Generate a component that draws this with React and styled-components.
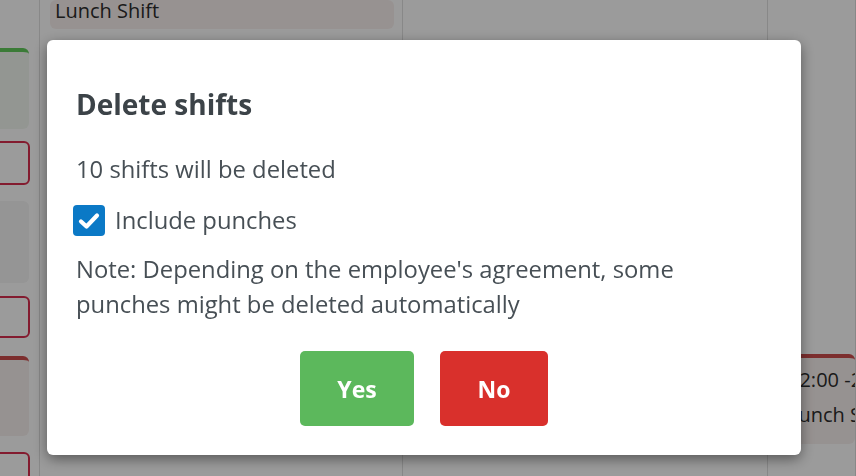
import styled, { createGlobalStyle } from 'styled-components';

const GlobalStyle = createGlobalStyle`
  html, body {
    margin: 0;
    padding: 0;
    width: 856px;
    height: 476px;
    overflow: hidden;
    font-family: 'Open Sans', 'Lato', sans-serif;
  }
`;

const Board = styled.div`
  display: grid;
  grid-template-columns: 40px 363px 365px 1fr;
  height: 476px;
  background: #fbfbfb;
`;

const Column = styled.div`
  display: flex;
  flex-direction: column;
  border-right: 1px solid #dcdcdc;
  padding: ${(p) => p.$pad || '0'};
  overflow: hidden;
`;

const ShiftCard = styled.div`
  flex: none;
  height: ${(p) => p.$h}px;
  margin-top: ${(p) => p.$mt || 0}px;
  margin-left: ${(p) => p.$ml || 0}px;
  margin-right: ${(p) => p.$mr || 0}px;
  border-radius: 6px;
  background: ${(p) => (p.$outline ? '#fafafa' : p.$bg || '#f0f0f0')};
  border: ${(p) => (p.$outline ? '2px solid #d42d4d' : 'none')};
  border-top: ${(p) => (p.$top ? `4px solid ${p.$top}` : p.$outline ? '2px solid #d42d4d' : 'none')};
  box-sizing: border-box;
  padding: ${(p) => p.$p || '6px 8px'};
  color: #2c2c2c;
  font-size: 20px;
  line-height: ${(p) => p.$lh || '34px'};
  white-space: nowrap;
  overflow: hidden;
`;

const Overlay = styled.div`
  position: fixed;
  inset: 0;
  background: rgba(0, 0, 0, 0.38);
`;

const Modal = styled.div`
  position: fixed;
  left: 47px;
  top: 40px;
  width: 754px;
  height: 415px;
  box-sizing: border-box;
  background: #fff;
  border-radius: 6px;
  box-shadow: 0 4px 14px rgba(0, 0, 0, 0.45);
  padding: 44px 29px 0;
  color: #474f55;
`;

const Title = styled.h2`
  margin: 0 0 28px;
  font-size: 28px;
  line-height: 40px;
  font-weight: 700;
  color: #3c4348;
`;

const Text = styled.p`
  margin: 0 0 ${(p) => p.$mb || 16}px;
  font-size: 23.8px;
  line-height: 35px;
`;

const CheckRow = styled.label`
  display: flex;
  align-items: center;
  gap: 10px;
  font-size: 23.8px;
  line-height: 35px;
  margin-bottom: 14px;
`;

const Box = styled.span`
  width: 32px;
  height: 31px;
  margin-left: -3px;
  border-radius: 4px;
  background: #0b79c6;
  display: flex;
  align-items: center;
  justify-content: center;
`;

const Actions = styled.div`
  display: flex;
  justify-content: center;
  gap: 26px;
  margin-top: 29px;
`;

const Button = styled.button`
  width: ${(p) => p.$w}px;
  height: 75px;
  border: none;
  border-radius: 5px;
  background: ${(p) => p.$bg};
  color: #fff;
  font-family: inherit;
  font-size: 23px;
  font-weight: 700;
`;

export default function App() {
  return (
    <>
      <GlobalStyle />
      <Board>
        <Column>
          <ShiftCard $h={81} $mt={48} $ml={-10} $mr={10} $top="#5fc75a" $bg="#eef3ec" />
          <ShiftCard $h={44} $mt={12} $ml={-10} $mr={9} $outline />
          <ShiftCard $h={82} $mt={16} $ml={-10} $mr={10} />
          <ShiftCard $h={42} $mt={13} $ml={-10} $mr={9} $outline />
          <ShiftCard $h={80} $mt={18} $ml={-10} $mr={10} $top="#c94b4b" $bg="#f3ecea" />
          <ShiftCard $h={60} $mt={16} $ml={-10} $mr={9} $outline />
        </Column>
        <Column $pad="0 8px 0 10px">
          <ShiftCard $h={29} $p="0 5px" $lh="22px" $bg="#f4ecea">
            Lunch Shift
          </ShiftCard>
        </Column>
        <Column />
        <Column $pad="0 0 0 12px">
          <ShiftCard $h={90} $mt={354} $p="4px 8px" $lh="35px" $top="#c94b4b" $bg="#f3ecea">
            12:00 -20:00
            <br />
            Lunch Shift
          </ShiftCard>
        </Column>
      </Board>
      <Overlay />
      <Modal>
        <Title>Delete shifts</Title>
        <Text>10 shifts will be deleted</Text>
        <CheckRow>
          <Box>
            <svg width="22" height="18" viewBox="0 0 22 18">
              <path d="M3 9.5 L8.5 14.5 L19 3.5" stroke="#fff" strokeWidth="4.2" fill="none" strokeLinecap="round" strokeLinejoin="round" />
            </svg>
          </Box>
          Include punches
        </CheckRow>
        <Text $mb={0}>
          Note: Depending on the employee's agreement, some
          <br />
          punches might be deleted automatically
        </Text>
        <Actions>
          <Button $w={114} $bg="#5cb85c">Yes</Button>
          <Button $w={108} $bg="#d9302c">No</Button>
        </Actions>
      </Modal>
    </>
  );
}
